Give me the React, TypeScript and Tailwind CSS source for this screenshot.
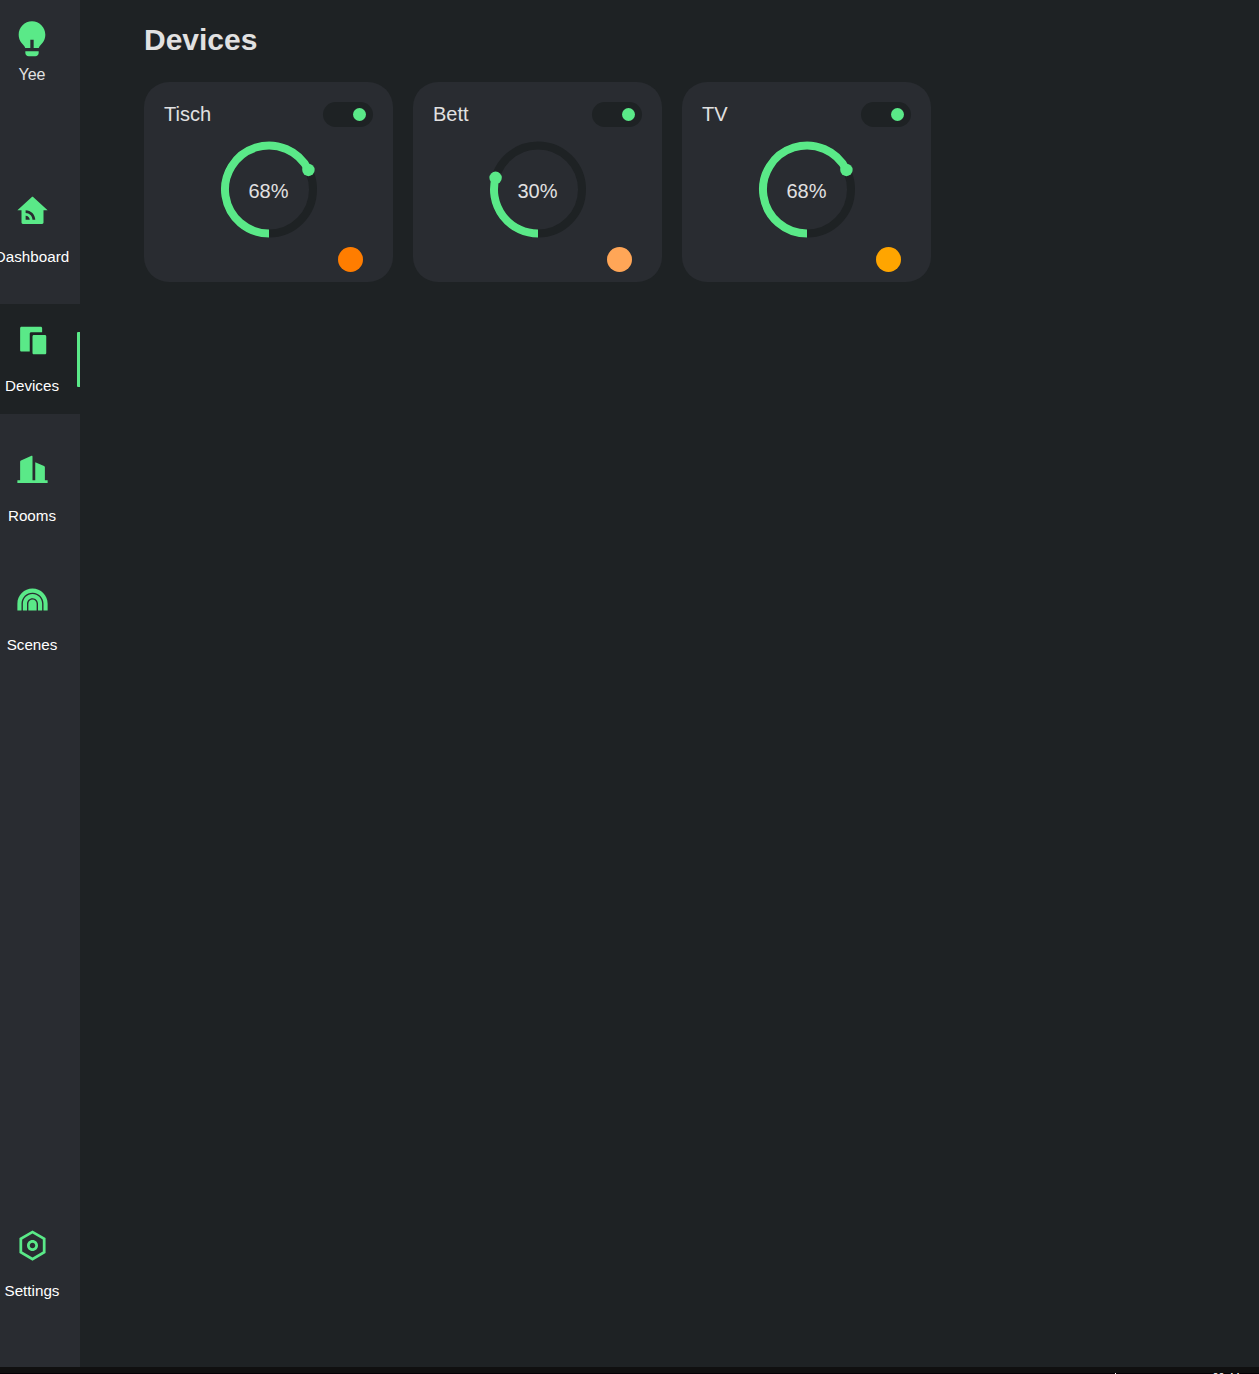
import type { IconType } from "react-icons";
import {
  RiLightbulbFill,
  RiHomeWifiFill,
  RiDeviceFill,
  RiBuilding2Fill,
  RiRainbowFill,
  RiSettingsLine,
} from "react-icons/ri";

const FONT = "font-['Liberation_Sans',Arial,sans-serif]";

function NavItem({ icon: Icon, label, active = false }: { icon: IconType; label: string; active?: boolean }) {
  return (
    <a
      className={`relative flex h-[110px] w-20 shrink-0 flex-col items-center pr-4 pt-[20px] ${
        active ? "bg-[#1e2224]" : ""
      }`}
    >
      <Icon className="ml-px size-[33px] shrink-0 text-[#5ae988]" />
      <span className="mt-5 text-[15.2px] leading-[18px] text-white">{label}</span>
      {active && <span className="absolute right-0 top-[28px] h-[55px] w-[3px] rounded-l-[1px] bg-[#5ae988]" />}
    </a>
  );
}

function Dial({ value }: { value: number }) {
  const angle = ((value - 1) / 99) * 2 * Math.PI;
  const x = 50 - 44 * Math.sin(angle);
  const y = 50 + 44 * Math.cos(angle);
  const large = angle > Math.PI ? 1 : 0;
  return (
    <div className="relative mx-auto size-[100px]">
      <svg viewBox="0 0.5 100 100" className="size-full" fill="none">
        <circle cx="50" cy="50" r="44" stroke="#1e2224" strokeWidth="8" />
        <path d={`M50 94A44 44 0 ${large} 1 ${x} ${y}`} stroke="#5ae988" strokeWidth="8" />
        <circle cx={x} cy={y} r="6.2" fill="#5ae988" />
      </svg>
      <span className="absolute inset-0 flex items-center justify-center pt-[3px] text-xl text-[#e1e1e1]">
        {value}%
      </span>
    </div>
  );
}

function DeviceCard({ name, value, color }: { name: string; value: number; color: string }) {
  return (
    <section className="flex h-[200px] w-[249px] flex-col rounded-[25px] bg-[#292c31] px-5 pt-5">
      <div className="flex h-[25px] items-center justify-between">
        <h2 className="text-xl leading-[25px] text-[#e1e1e1]">{name}</h2>
        <div className="flex h-[25px] w-[50px] items-center justify-end rounded-full bg-[#1e2224] pr-[7px]">
          <span className="size-[13px] rounded-full bg-[#5ae988]" />
        </div>
      </div>
      <div className="mt-[12.5px]">
        <Dial value={value} />
      </div>
      <span className={`mr-[10px] mt-[7.5px] size-[25px] self-end rounded-full ${color}`} />
    </section>
  );
}

export default function App() {
  return (
    <div className={`flex h-[1374px] w-[1259px] flex-col overflow-hidden bg-[#1e2224] ${FONT}`}>
      <div className="flex h-[1367px] shrink-0">
        <aside className="flex w-20 shrink-0 flex-col overflow-hidden bg-[#292c31]">
          <div className="flex h-[174.6px] shrink-0 flex-col items-center pr-4 pt-[18px]">
            <RiLightbulbFill className="size-[40px] shrink-0 text-[#5ae988]" />
            <span className="mt-2 text-base leading-[18px] text-[#e1e1e1]">Yee</span>
          </div>
          <nav className="flex grow flex-col gap-[19.5px]">
            <NavItem icon={RiHomeWifiFill} label="Dashboard" />
            <NavItem icon={RiDeviceFill} label="Devices" active />
            <NavItem icon={RiBuilding2Fill} label="Rooms" />
            <NavItem icon={RiRainbowFill} label="Scenes" />
          </nav>
          <div className="h-[158px] shrink-0">
            <NavItem icon={RiSettingsLine} label="Settings" />
          </div>
        </aside>
        <main className="grow pl-16 pt-[22px]">
          <h1 className="text-[30px] font-bold leading-[35px] text-[#e1e1e1]">Devices</h1>
          <div className="mt-[25px] flex gap-5">
            <DeviceCard name="Tisch" value={68} color="bg-[#ff7d00]" />
            <DeviceCard name="Bett" value={30} color="bg-[#ffa657]" />
            <DeviceCard name="TV" value={68} color="bg-[#ffa500]" />
          </div>
        </main>
      </div>
      <div className="flex h-[7px] shrink-0 flex-col bg-[#101010]">
        <div className="mt-[6px] flex h-px items-start justify-end overflow-hidden bg-[#050005] pr-[19px]">
          <span className="mr-24 size-px bg-white" />
          <span className="-mt-px text-[11px] leading-[11px] text-white">09:44</span>
        </div>
      </div>
    </div>
  );
}
